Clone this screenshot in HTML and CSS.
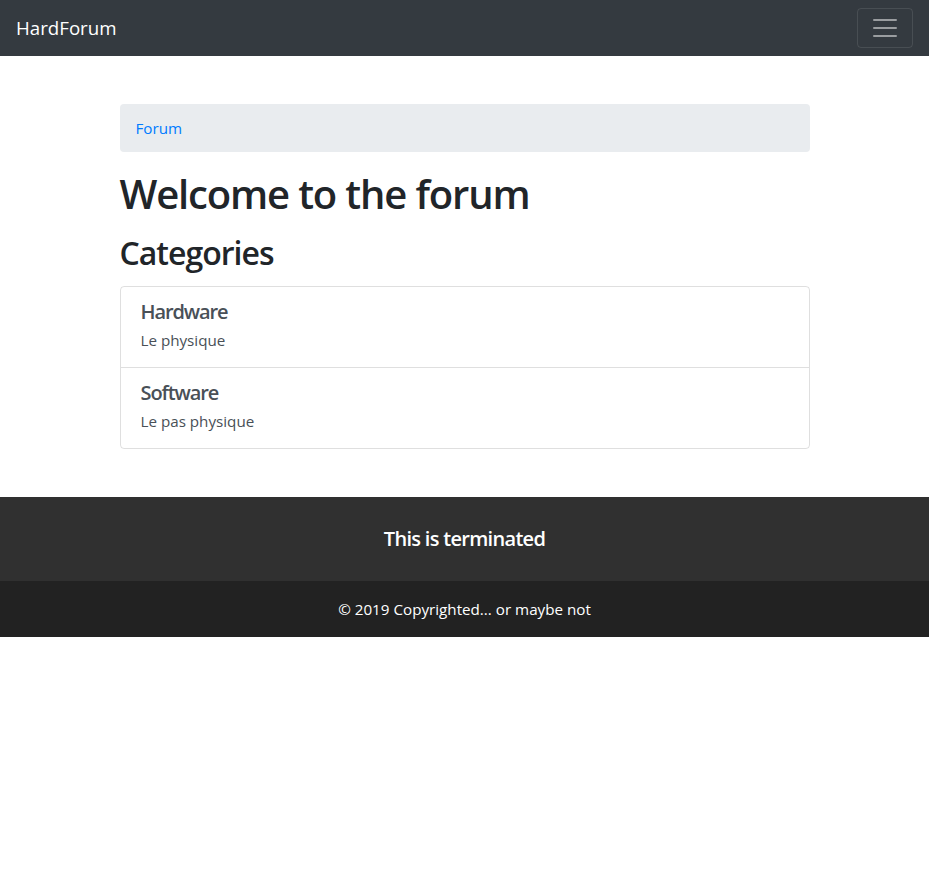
FILE: index.html
```html
<!DOCTYPE html>
<html lang="en">
<head>
<meta charset="utf-8">
<title>HardForum</title>
<link rel="stylesheet" href="styles.css">
</head>
<body>
<nav class="navbar">
  <a class="brand" href="#">HardForum</a>
  <button class="toggler" type="button" aria-label="Toggle navigation">
    <svg class="toggler-icon" viewBox="0 0 30 30" width="30" height="30"><path stroke="rgba(255,255,255,0.5)" stroke-linecap="round" stroke-miterlimit="10" stroke-width="2" d="M4 7h22M4 15h22M4 23h22"/></svg>
  </button>
</nav>
<main class="container">
  <ol class="breadcrumb"><li><a href="#">Forum</a></li></ol>
  <h1 class="title">Welcome to the forum</h1>
  <h2 class="subtitle">Categories</h2>
  <div class="list-group">
    <a class="list-item" href="#">
      <h5 class="item-title">Hardware</h5>
      <p class="item-text">Le physique</p>
    </a>
    <a class="list-item" href="#">
      <h5 class="item-title">Software</h5>
      <p class="item-text">Le pas physique</p>
    </a>
  </div>
</main>
<footer class="footer">
  <div class="footer-top"><h5 class="footer-title">This is terminated</h5></div>
  <div class="footer-bottom">© 2019 Copyrighted... or maybe not</div>
</footer>
</body>
</html>
```
FILE: styles.css
```css
* { box-sizing: border-box; }
html, body { margin: 0; padding: 0; }
body {
  font-family: "Open Sans", "Noto Sans", Arial, sans-serif;
  font-size: 15.2px;
  line-height: 24px;
  color: #212529;
  background: #fff;
}
a { text-decoration: none; }
.navbar {
  background: #343a40;
  display: flex;
  align-items: center;
  justify-content: space-between;
  padding: 8px 16px;
}
.brand {
  color: #fff;
  font-size: 18.7px;
  line-height: 30px;
  padding: 5px 0;
}
.toggler {
  display: flex;
  align-items: center;
  justify-content: center;
  width: 56px;
  height: 40px;
  padding: 4px 12px;
  background: transparent;
  border: 1px solid rgba(255,255,255,0.1);
  border-radius: 4px;
}
.toggler-icon { display: block; }
.container {
  width: 720px;
  margin: 0 auto;
  padding: 48px 15px 48px;
}
.breadcrumb {
  list-style: none;
  margin: 0 0 16px;
  padding: 12px 16px;
  background: #e9ecef;
  border-radius: 4px;
}
.breadcrumb a { color: #007bff; }
.title {
  font-size: 40px;
  font-weight: 600;
  letter-spacing: -1.15px;
  line-height: 48px;
  margin: 0 0 16px;
  padding-top: 2px;
}
.subtitle {
  font-size: 32px;
  font-weight: 600;
  letter-spacing: -1px;
  line-height: 38px;
  margin: 0 0 14px;
}
.list-group {
  display: flex;
  flex-direction: column;
  border: 1px solid rgba(0,0,0,0.125);
  border-radius: 4px;
}
.list-item {
  display: block;
  padding: 13px 20px 11px;
  color: #495057;
}
.list-item + .list-item { border-top: 1px solid rgba(0,0,0,0.125); }
.item-title {
  font-size: 20px;
  font-weight: 600;
  letter-spacing: -1.1px;
  line-height: 24px;
  margin: 0 0 4px;
}
.item-text {
  margin: 0 0 4px;
}
.footer { color: #fff; text-align: center; }
.footer-top {
  background: #303030;
  padding: 30px 0;
}
.footer-title {
  margin: 0;
  font-size: 20px;
  font-weight: 600;
  letter-spacing: -0.7px;
  line-height: 24px;
}
.footer-bottom {
  background: #222;
  padding: 16px 0;
}
```
